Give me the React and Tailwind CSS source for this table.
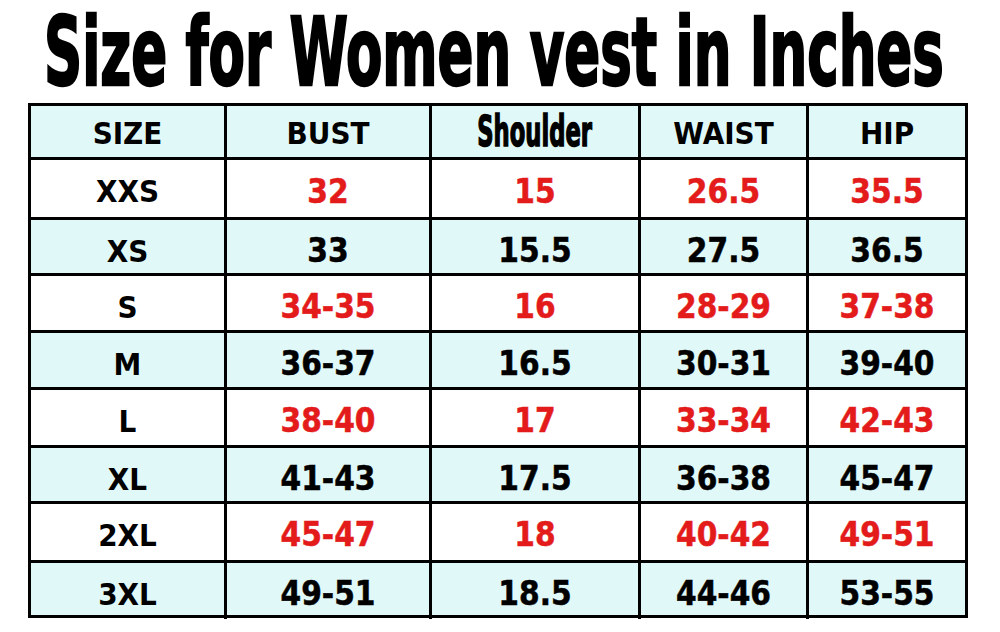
import React from "react";

const cond = { fontFamily: '"DejaVu Sans Condensed", "DejaVu Sans", sans-serif', fontStretch: "condensed" };

// each row: [size, bust, shoulder, waist, hip], colored rows alternate
const ROWS = [
  { cells: ["XXS", "32", "15", "26.5", "35.5"], red: true, h: "h-[60px]" },
  { cells: ["XS", "33", "15.5", "27.5", "36.5"], red: false, h: "h-[56px]" },
  { cells: ["S", "34-35", "16", "28-29", "37-38"], red: true, h: "h-[57px]" },
  { cells: ["M", "36-37", "16.5", "30-31", "39-40"], red: false, h: "h-[57px]" },
  { cells: ["L", "38-40", "17", "33-34", "42-43"], red: true, h: "h-[58px]" },
  { cells: ["XL", "41-43", "17.5", "36-38", "45-47"], red: false, h: "h-[56px]" },
  { cells: ["2XL", "45-47", "18", "40-42", "49-51"], red: true, h: "h-[59px]" },
  { cells: ["3XL", "49-51", "18.5", "44-46", "53-55"], red: false, h: "h-[52px]" },
];

const COLS = "grid grid-cols-[196px_205px_209px_168px_156px]";

const App = () => {
  return (
    <div className="w-[1000px] h-[632px] bg-white">
      {/* Title, squeezed to a condensed poster face */}
      <div className="h-[103px] pt-[6px] pl-[44px] whitespace-nowrap">
        <span
          className="inline-block origin-left scale-x-[0.62] mr-[-560px] text-[95px] leading-[92px] font-bold text-black [-webkit-text-stroke:2.5px_black]"
          style={cond}
        >
          Size for Women vest in Inches
        </span>
      </div>

      {/* Table */}
      <div className="ml-[28px] w-[940px] border-[3px] border-black" style={cond}>
        <div className={`${COLS} h-[54px] border-b-[3px] border-black bg-[#e0f8f8] font-bold text-black`}>
          <div className="flex items-center justify-center border-r-[3px] border-black text-[31px] pt-[3px]">SIZE</div>
          <div className="flex items-center justify-center border-r-[3px] border-black text-[31px] pt-[3px]">BUST</div>
          <div className="flex items-center justify-center border-r-[3px] border-black overflow-hidden">
            <span className="inline-block scale-x-[0.6] text-[42px] leading-none [-webkit-text-stroke:1.5px_black]">
              Shoulder
            </span>
          </div>
          <div className="flex items-center justify-center border-r-[3px] border-black text-[31px] pt-[3px]">WAIST</div>
          <div className="flex items-center justify-center text-[31px] pt-[3px]">HIP</div>
        </div>

        {ROWS.map((row, i) => {
          const last = i === ROWS.length - 1;
          return (
            <div
              key={row.cells[0]}
              className={`${COLS} ${row.h} font-bold ${last ? "" : "border-b-[3px] border-black"} ${
                row.red ? "bg-white" : "bg-[#e0f8f8]"
              }`}
            >
              {row.cells.map((c, j) => (
                <div
                  key={j}
                  className={`flex items-center justify-center pt-[6px] ${j < 4 ? "border-r-[3px] border-black" : ""} ${
                    j === 0
                      ? "text-[31px] text-black"
                      : row.red
                      ? "text-[33px] text-[#e31b1b] [-webkit-text-stroke:0.5px_#e31b1b]"
                      : "text-[33px] text-black [-webkit-text-stroke:0.5px_black]"
                  }`}
                >
                  {c}
                </div>
              ))}
            </div>
          );
        })}
      </div>
    </div>
  );
};

export default App;
